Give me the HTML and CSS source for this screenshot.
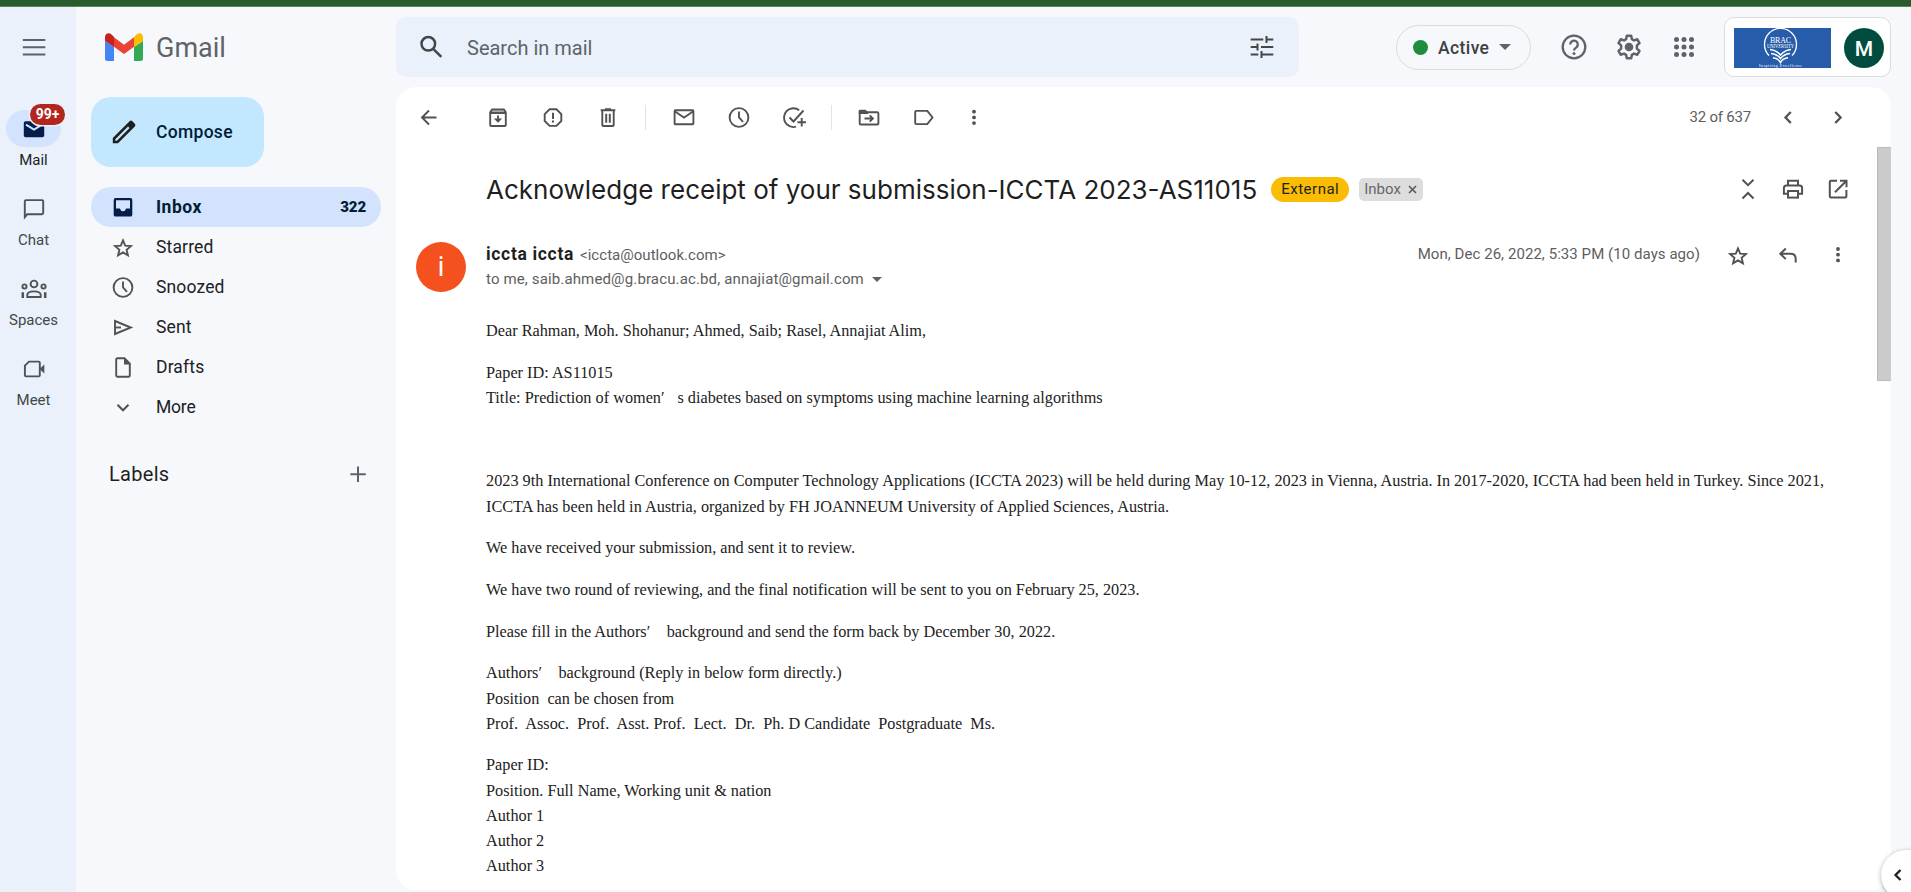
FILE: index.html
```html
<!DOCTYPE html>
<html lang="en">
<head>
<meta charset="utf-8">
<title>Gmail</title>
<link rel="stylesheet" href="styles.css">
</head>
<body>
<div class="window-strip"></div>
<div class="app">
  <nav class="rail">
    <div class="rail-menu"><svg class="ic gray" viewBox="0 0 24 24"><path class="s2" d="M.8 5h22.5M.8 12.3h22.5M.8 19.6h22.5"/></svg></div>
    <div class="rail-item active">
      <div class="rail-icon"><svg class="ic navy" viewBox="0 0 24 24"><rect class="f" x="1.8" y="4.2" width="20.4" height="16" rx="1.8"/><path class="pale" d="M4 7.6l8 5 8-5"/></svg><span class="badge">99+</span></div>
      <span class="rail-label">Mail</span>
    </div>
    <div class="rail-item">
      <div class="rail-icon"><svg class="ic" viewBox="0 0 24 24"><path class="s" d="M2.8 20.2V4.300q0-1.200 1.200-1.200h16q1.200 0 1.200 1.200v11.800q0 1.200-1.200 1.200H5.200z"/></svg></div>
      <span class="rail-label">Chat</span>
    </div>
    <div class="rail-item">
      <div class="rail-icon"><svg class="ic wide" viewBox="0 0 28 24"><circle class="s" cx="14" cy="7" r="3.400"/><circle class="s" cx="4.500" cy="9.500" r="2.100"/><circle class="s" cx="23.500" cy="9.500" r="2.100"/><path class="s" d="M7.300 20v-2q0-3.600 6.700-3.600t6.700 3.600v2z"/><path class="s25" d="M2.800 21v-5.800M25.200 21v-5.800"/></svg></div>
      <span class="rail-label">Spaces</span>
    </div>
    <div class="rail-item">
      <div class="rail-icon"><svg class="ic" viewBox="0 0 24 24"><path class="s" d="M7 4.600h9.700q1.100 0 1.100 1.100v12.600q0 1.100-1.100 1.100H4q-1.100 0-1.100-1.100V8.700z"/><path class="f" d="M17.500 12l4.800-4.500v9z"/></svg></div>
      <span class="rail-label">Meet</span>
    </div>
  </nav>

  <div class="page">
    <header class="header">
      <div class="brand">
        <svg class="logo" viewBox="0 0 38 28"><path fill="#4285f4" d="M0 8l9 6v14H2.500A2.500 2.500 0 0 1 0 25.500z"/><path fill="#34a853" d="M38 8l-9 6v14h6.500a2.500 2.500 0 0 0 2.500-2.500z"/><path fill="#ea4335" d="M8.600 4L19 11.700 29.400 4v9.400L19 21 8.600 13.400z"/><path fill="#fbbc04" d="M29 4l2.800-2.800C34.500-.8 38 .8 38 4v4l-9 6z"/><path fill="#c5221f" d="M9 4L6.200 1.200C3.500-.8 0 .8 0 4v4l9 6z"/></svg>
        <span class="brand-name">Gmail</span>
      </div>
      <div class="search">
        <svg class="ic dark" viewBox="0 0 24 24"><circle class="s25" cx="9.300" cy="8.800" r="6.800"/><path class="s25" d="M14 13.600l8.300 8.300"/></svg>
        <span class="search-text">Search in mail</span>
        <svg class="ic dark" viewBox="0 0 24 24"><path class="s2" d="M.7 4.500h12.600M16.500 1v7M16.500 4.500h6.800M.7 12h6.800M7.500 8.500v7M11 12h12.300M.7 19.500h7.600M11.500 16v7M11.500 19.500h11.800"/></svg>
      </div>
      <div class="status"><span class="dot"></span><span class="status-text">Active</span><span class="caret"></span></div>
      <svg class="ic gray h-help" viewBox="0 0 26 26"><circle class="s23" cx="13" cy="13" r="11.300"/><path class="s23" d="M9.200 10.500a3.800 3.800 0 1 1 5.900 3.100Q13 15 13 16.600"/><circle class="f" cx="13" cy="19.400" r="1.500"/></svg>
      <svg class="ic gray h-gear" viewBox="0 0 26 26"><path class="s25 j" d="M10.800 1.800h4.400l.7 3.400 2.100 1.200 3.300-1.100 2.200 3.800-2.600 2.300v3.200l2.600 2.300-2.200 3.800-3.300-1.100-2.100 1.200-.7 3.400h-4.400l-.7-3.400-2.100-1.200-3.300 1.100-2.200-3.800 2.600-2.300v-3.200L2.500 9.100l2.200-3.800L8 6.400l2.100-1.200z"/><circle class="f" cx="13" cy="13" r="4.300"/></svg>
      <svg class="ic gray h-apps" viewBox="0 0 24 24"><g class="f"><circle cx="4.500" cy="4.500" r="2.500"/><circle cx="12" cy="4.500" r="2.500"/><circle cx="19.500" cy="4.500" r="2.500"/><circle cx="4.500" cy="12" r="2.500"/><circle cx="12" cy="12" r="2.500"/><circle cx="19.500" cy="12" r="2.500"/><circle cx="4.500" cy="19.500" r="2.500"/><circle cx="12" cy="19.500" r="2.500"/><circle cx="19.500" cy="19.500" r="2.500"/></g></svg>
      <div class="account">
        <svg class="org" viewBox="0 0 97 40"><rect width="97" height="40" fill="#275caa"/><g fill="none" stroke="#fff"><path stroke-width="1.300" d="M35 27.500A16 16 0 1 1 58 27.500"/><path stroke-width="1.600" d="M36 21.500q6 .5 10.500 5.500 4.500-5 10.500-5.500M37 25.500q6 .5 9.500 5 3.500-4.500 9.500-5M39 29.800q5 .5 7.500 4.700 2.500-4.200 7.500-4.700"/></g><g fill="#fff" text-anchor="middle" font-family="Liberation Serif, serif"><text x="46.500" y="14.800" font-size="8" textLength="21">BRAC</text><text x="46.500" y="20" font-size="5.500" textLength="27" lengthAdjust="spacingAndGlyphs">UNIVERSITY</text><text x="46.500" y="39.200" font-size="4" textLength="43">Inspiring Excellence</text></g></svg>
        <span class="avatar-m">M</span>
      </div>
    </header>

    <div class="content">
      <aside class="side">
        <div class="compose"><svg class="ic pencil" viewBox="0 0 24 24"><path class="f" fill-rule="evenodd" d="M.8 23.300v-5.200L17.600 1.300q1.400-1.400 2.800 0l2.400 2.400q1.400 1.400 0 2.800L6 23.300zM3.300 20.800h1.600L17.600 8.100 16 6.500 3.300 19.200z"/></svg><span>Compose</span></div>
        <div class="nav">
          <div class="nav-row sel"><svg class="ic navy" viewBox="0 0 24 24"><path class="f" fill-rule="evenodd" d="M4.600 3h14.800q1.900 0 1.900 1.900v14.800q0 1.900-1.900 1.900H4.600q-1.900 0-1.900-1.900V4.900Q2.700 3 4.600 3zM5 5.200v8.300h3.800q1 2.700 3.200 2.700t3.200-2.700H19V5.200z"/></svg><span>Inbox</span><b>322</b></div>
          <div class="nav-row"><svg class="ic" viewBox="0 0 24 24"><path class="s" d="M12 5.400l2.200 5.200 5.700.5-4.300 3.700 1.300 5.500-4.900-2.900-4.900 2.900 1.300-5.500-4.300-3.700 5.700-.5z"/></svg><span>Starred</span></div>
          <div class="nav-row"><svg class="ic" viewBox="0 0 24 24"><circle class="s" cx="12" cy="12.500" r="9.400"/><path class="s" d="M12 6.500v6l4 4.300"/></svg><span>Snoozed</span></div>
          <div class="nav-row"><svg class="ic" viewBox="0 0 24 24"><path class="s" d="M4 6l15.800 6.500L4 19z"/><path class="s" d="M4 12.500h6"/></svg><span>Sent</span></div>
          <div class="nav-row"><svg class="ic" viewBox="0 0 24 24"><path class="s" d="M13.500 3.300H6.300q-1.100 0-1.100 1.100v16.200q0 1.100 1.100 1.100h11.400q1.100 0 1.100-1.100V8.600z"/><path class="f" d="M13 3l6.500 6.500H13z"/></svg><span>Drafts</span></div>
          <div class="nav-row more"><svg class="ic" viewBox="0 0 24 24"><path class="s2" d="M6.500 9.800l5.500 5.500 5.500-5.500"/></svg><span>More</span></div>
        </div>
        <div class="labels"><span>Labels</span><svg class="ic gray" viewBox="0 0 24 24"><path class="s2" d="M12 4.500v15.500M4.300 12.300h15.500"/></svg></div>
      </aside>

      <main class="card">
        <div class="toolbar">
          <svg class="ic" viewBox="0 0 24 24"><path class="s" d="M19.500 12.500h-14M12 5.500l-7 7 7 7"/></svg>
          <svg class="ic g1" viewBox="0 0 24 24"><path class="s" d="M4.200 7.200V20q0 1 1 1h13.600q1 0 1-1V7.200L17.900 4.400H6.100z"/><path class="f tint" d="M4.500 5h15v2.600h-15z"/><path class="s" d="M4 8h16M12 10.500v5"/><path class="f" d="M7.800 13.500h8.400L12 17.800z"/></svg>
          <svg class="ic g2" viewBox="0 0 24 24"><path class="s" d="M8.600 4.300h6.800l4.900 4.900v6.800l-4.900 4.900H8.600l-4.900-4.900V9.200z"/><path class="s2" d="M12 7.700v6.300M12 15.600v2"/></svg>
          <svg class="ic g2" viewBox="0 0 24 24"><path class="s2" d="M4.700 5.300h14.600M9 4.300h6"/><path class="s" d="M6.300 6v14q0 1 1 1h9.400q1 0 1-1V6"/><path class="s2" d="M10.200 8.800v9M13.800 8.800v9"/></svg>
          <i class="sep"></i>
          <svg class="ic g3" viewBox="0 0 24 24"><rect class="s" x="2.600" y="5.300" width="18.800" height="14" rx=".8"/><path class="s" d="M3 6.500l9 6 9-6"/></svg>
          <svg class="ic g2" viewBox="0 0 24 24"><circle class="s" cx="12" cy="12.500" r="9.400"/><path class="s" d="M12 6.500v6l4 4.300"/></svg>
          <svg class="ic g2" viewBox="0 0 24 24"><path class="s" d="M17.200 5.200a9.400 9.400 0 1 0-3.200 16.500M7.500 12.500l4 4L21.500 5.500M15.500 17.300h8.500M19.700 13v8.500"/></svg>
          <i class="sep"></i>
          <svg class="ic g3" viewBox="0 0 24 24"><path class="s" d="M2.700 7.300h17.600q1.100 0 1.100 1.100v10q0 1.100-1.100 1.100H3.700q-1 0-1-1z"/><path class="f" d="M1.800 9V6q0-1.300 1.300-1.300h5.500l2.500 2.800v1.500z"/><path class="s" d="M7.500 13.500h8M12.700 10.300l3.200 3.200-3.200 3.200"/></svg>
          <svg class="ic g2" viewBox="0 0 24 24"><path class="s" d="M15.300 5.900H4.300q-1.100 0-1.100 1.100v11q0 1.100 1.100 1.100h11l5.200-6.600z"/></svg>
          <svg class="ic g4" viewBox="0 0 24 24"><g class="f"><circle cx="12" cy="6.700" r="1.900"/><circle cx="12" cy="12.400" r="1.900"/><circle cx="12" cy="18.100" r="1.900"/></g></svg>
          <span class="count">32 of 637</span>
          <svg class="ic c1" viewBox="0 0 24 24"><path class="s23" d="M14.800 7l-5.300 5.500 5.300 5.500"/></svg>
          <svg class="ic c2" viewBox="0 0 24 24"><path class="s23" d="M9.300 7l5.300 5.500L9.300 18"/></svg>
        </div>

        <div class="scroll">
          <div class="mail">
            <div class="subject">
              <h1>Acknowledge receipt of your submission-ICCTA 2023-AS11015</h1>
              <span class="external">External</span>
              <span class="tag">Inbox<svg viewBox="0 0 9 9"><path d="M1 1l7 7M8 1L1 8"/></svg></span>
              <span class="subject-actions">
                <svg class="ic" viewBox="0 0 24 24"><path class="s2" d="M6.500 2.700l5.500 5.500 5.500-5.500M6.500 21.500l5.500-5.500 5.500 5.500"/></svg>
                <svg class="ic" viewBox="0 0 24 24"><path class="s2" d="M7 8V3.800h10V8M6.800 16.800H2.900V11q0-2.500 2.500-2.500h13.200q2.500 0 2.500 2.500v5.800h-3.900"/><rect class="s2" x="7" y="14" width="10" height="6.600"/></svg>
                <svg class="ic" viewBox="0 0 24 24"><path class="s2" d="M11 3.800H5q-1.200 0-1.200 1.200v14.200q0 1.200 1.200 1.200h14.200q1.200 0 1.200-1.200V13M14 3.800h6.500v6.500M20 4.300L9 15.300"/></svg>
              </span>
            </div>
            <div class="sender">
              <span class="avatar-i">i</span>
              <div class="who">
                <div class="line1"><span class="name">iccta iccta</span><span class="addr">&lt;iccta@outlook.com&gt;</span></div>
                <div class="line2"><span>to me, saib.ahmed@g.bracu.ac.bd, annajiat@gmail.com</span><span class="caret small"></span></div>
              </div>
              <span class="date">Mon, Dec 26, 2022, 5:33 PM (10 days ago)</span>
              <span class="sender-actions">
                <svg class="ic" viewBox="0 0 24 24"><path class="s" d="M12 5.400l2.200 5.200 5.700.5-4.300 3.700 1.300 5.500-4.900-2.900-4.900 2.900 1.300-5.500-4.300-3.700 5.700-.5z"/></svg>
                <svg class="ic" viewBox="0 0 24 24"><path class="s2" d="M9.800 5.500l-5.500 5.300 5.500 5.300M4.800 10.800H14.500q5.200 0 5.200 5.200v3.500"/></svg>
                <svg class="ic" viewBox="0 0 24 24"><g class="f"><circle cx="12" cy="6" r="1.900"/><circle cx="12" cy="11.700" r="1.900"/><circle cx="12" cy="17.400" r="1.900"/></g></svg>
              </span>
            </div>
            <div class="body">
              <p>Dear Rahman, Moh. Shohanur; Ahmed, Saib; Rasel, Annajiat Alim,</p>
              <p>Paper ID: AS11015<br>Title: Prediction of women<i class="prime">′</i>s diabetes based on symptoms using machine learning algorithms</p>
              <p>&nbsp;</p>
              <p>2023 9th International Conference on Computer Technology Applications (ICCTA 2023) will be held during May 10-12, 2023 in Vienna, Austria. In 2017-2020, ICCTA had been held in Turkey. Since 2021,<br>ICCTA has been held in Austria, organized by FH JOANNEUM University of Applied Sciences, Austria.</p>
              <p>We have received your submission, and sent it to review.</p>
              <p>We have two round of reviewing, and the final notification will be sent to you on February 25, 2023.</p>
              <p>Please fill in the Authors<i class="prime spaced">′</i>background and send the form back by December 30, 2022.</p>
              <p>Authors<i class="prime spaced">′</i>background (Reply in below form directly.)<br>Position&nbsp; can be chosen from<br>Prof.&nbsp; Assoc.&nbsp; Prof.&nbsp; Asst. Prof.&nbsp; Lect.&nbsp; Dr.&nbsp; Ph. D Candidate&nbsp; Postgraduate&nbsp; Ms.</p>
              <p>Paper ID:<br>Position. Full Name, Working unit &amp; nation<br>Author 1<br>Author 2<br>Author 3</p>
            </div>
          </div>
          <div class="thumb"></div>
        </div>
      </main>
    </div>
  </div>
  <div class="panel-toggle"><svg viewBox="0 0 10 14"><path d="M7.500 2L2.500 7l5 5"/></svg></div>
</div>
</body>
</html>
```

FILE: styles.css
```css
* { box-sizing: border-box; }
body { margin: 0; width: 1911px; height: 892px; overflow: hidden; background: #f6f8fc; color: #1f1f1f; font-family: Roboto, "Liberation Sans", sans-serif; }
svg { display: block; flex: none; }
.ic { width: 24px; height: 24px; overflow: visible; color: #505352; }
.ic.wide { width: 28px; }
.ic.dark { color: #444746; }
.ic.gray { color: #5f6368; }
.ic.navy { color: #041e49; }
.s, .s2, .s23, .s25 { fill: none; stroke: currentColor; stroke-width: 1.9; }
.s2 { stroke-width: 2; }
.s23 { stroke-width: 2.3; }
.s25 { stroke-width: 2.5; }
.j { stroke-linejoin: round; }
.f { fill: currentColor; }
.tint { opacity: .5; }
.pale { fill: none; stroke: #d3e3fd; stroke-width: 2; }

.window-strip { height: 7px; background: #285c2c; border-bottom: 1px solid #5a855d; }
.app { display: flex; height: 885px; position: relative; }

.rail { width: 76px; background: #eaf1fb; padding: 28px 0 0 6px; flex: none; }
.rail-menu { height: 75px; padding-left: 16px; }
.rail-item { width: 55px; height: 80px; display: flex; flex-direction: column; align-items: center; }
.rail-icon { width: 55px; height: 37px; display: flex; align-items: center; justify-content: center; position: relative; border-radius: 19px; flex: none; }
.active .rail-icon { background: #d3e3fd; }
.rail-label { font-size: 15px; line-height: 18px; margin-top: 4px; color: #444746; white-space: nowrap; }
.active .rail-label { color: #1f1f1f; }
.badge { position: absolute; left: 24px; top: -6px; width: 35px; height: 21px; border-radius: 11px; background: #b3261e; color: #fff; font-size: 14px; line-height: 21px; font-weight: 700; text-align: center; box-shadow: 0 0 0 1.5px #eaf1fb; }

.page { flex: 1; display: flex; flex-direction: column; }
.header { height: 80px; display: flex; align-items: center; flex: none; padding-right: 20px; }
.brand { width: 320px; display: flex; align-items: center; padding-left: 29px; }
.logo { width: 38px; height: 28px; }
.brand-name { margin-left: 13px; padding-top: 1px; font-size: 27px; color: #5f6368; }
.search { width: 903px; height: 60px; border-radius: 10px; background: #eaf1fb; display: flex; align-items: center; padding: 0 25px 0 23px; }
.search-text { flex: 1; margin-left: 24px; padding-top: 2px; font-size: 20px; color: #5f6368; }
.status { width: 135px; height: 45px; margin-left: 97px; border: 1px solid #dadce0; border-radius: 23px; display: flex; align-items: center; padding-left: 16px; }
.dot { width: 15px; height: 15px; border-radius: 50%; background: #1e8e3e; }
.status-text { margin-left: 10px; padding-top: 1px; font-size: 17.5px; font-weight: 500; letter-spacing: .4px; color: #3c4043; }
.caret { width: 0; border: 6px solid transparent; border-top: 6.5px solid #5f6368; border-bottom: 0; margin-left: 10px; }
.h-help { width: 26px; height: 26px; margin-left: 30px; }
.h-gear { width: 26px; height: 26px; margin-left: 29px; }
.h-apps { margin-left: 30px; }
.account { width: 167px; height: 60px; margin-left: auto; background: #fff; border: 1px solid #dadce0; border-radius: 10px; display: flex; align-items: center; padding: 2px 6px 0 9px; justify-content: space-between; }
.org { width: 97px; height: 40px; }
.avatar-m { width: 40px; height: 40px; border-radius: 50%; background: #004d40; color: #fff; font-size: 21px; font-weight: 500; line-height: 43px; text-align: center; }

.content { flex: 1; display: flex; min-height: 0; }
.side { width: 320px; padding: 10px 15px 0; flex: none; }
.compose { width: 173px; height: 70px; border-radius: 20px; background: #c2e7ff; display: flex; align-items: center; gap: 20px; padding-left: 21px; font-size: 17.5px; font-weight: 500; letter-spacing: .3px; color: #001d35; }
.pencil { color: #1f1f1f; }
.nav { margin-top: 20px; }
.nav-row { height: 40px; display: flex; align-items: center; gap: 21px; padding: 0 15px 0 20px; font-size: 17.5px; letter-spacing: .15px; color: #202124; border-radius: 20px; }
.nav-row.sel { background: #d3e3fd; font-weight: 700; letter-spacing: .5px; color: #001d35; }
.nav-row.more { letter-spacing: -.2px; }
.nav-row b { margin-left: auto; font-size: 15px; letter-spacing: -.1px; }
.labels { display: flex; justify-content: space-between; align-items: center; margin-top: 35px; height: 24px; padding: 0 11px 0 18px; font-size: 20px; letter-spacing: .3px; }

.card { width: 1495px; height: 803px; background: #fff; border-radius: 20px; overflow: hidden; display: flex; flex-direction: column; }
.toolbar { height: 60px; display: flex; align-items: center; padding-left: 21px; flex: none; }
.g1 { margin-left: 45px; }
.g2 { margin-left: 31px; }
.sep { width: 1px; height: 25px; background: #e1e5ea; margin-left: 25px; }
.g3 { margin-left: 25.5px; }
.g4 { margin-left: 26px; }
.count { margin-left: auto; font-size: 15px; letter-spacing: -.2px; color: #5e5e5e; }
.c1 { margin-left: 25px; }
.c2 { margin: 0 41px 0 26px; }
.scroll { flex: 1; display: flex; justify-content: space-between; min-height: 0; }
.thumb { width: 14px; height: 234px; background: #cbcbcb; border: 1px solid #bbb; border-right: 0; }
.mail { width: 1467px; padding: 24px 0 0 20px; }
.subject { display: flex; align-items: center; height: 36px; padding-left: 70px; }
.subject h1 { margin: 0; padding-top: 2px; font: 400 26px/36px Inter, Roboto, sans-serif; white-space: nowrap; }
.external { height: 25px; line-height: 25px; padding: 0 10px; margin-left: 14px; border-radius: 13px; background: #fbbc04; font-size: 15px; letter-spacing: .5px; }
.tag { height: 23px; line-height: 23px; margin-left: 10px; padding: 0 6px 0 5px; background: #ddd; border-radius: 5px; display: flex; align-items: center; gap: 7px; font-size: 15px; color: #666; }
.tag svg { width: 9px; height: 9px; fill: none; stroke: #555; stroke-width: 1.5; }
.subject-actions { margin-left: auto; display: flex; gap: 21px; padding-right: 13px; }
.sender { display: flex; margin-top: 35px; height: 50px; }
.avatar-i { width: 50px; height: 50px; border-radius: 50%; background: #f4511e; color: #fff; font-size: 27px; line-height: 51px; text-align: center; flex: none; }
.who { margin-left: 20px; font-size: 15px; letter-spacing: .14px; color: #5e5e5e; white-space: nowrap; }
.line1 { height: 25px; line-height: 24px; display: flex; align-items: baseline; gap: 6px; }
.line2 { height: 25px; line-height: 25px; display: flex; align-items: center; }
.name { font-size: 17.5px; font-weight: 700; letter-spacing: .67px; line-height: 24px; color: #1f1f1f; }
.addr { letter-spacing: .03px; }
.small { border-width: 5px 5px 0; margin-left: 8px; }
.date { margin-left: auto; font-size: 15px; letter-spacing: .06px; line-height: 25px; color: #5e5e5e; white-space: nowrap; }
.sender-actions { display: flex; gap: 26px; margin: 1px 13px 0 26px; }
.body { margin: 27px 0 0 70px; font: 16.25px/25.2px "Liberation Serif", serif; color: #222; white-space: nowrap; }
.body p { margin: 0 0 16.5px; }
.prime { display: inline-block; width: 16.5px; font-style: normal; line-height: 1; }
.spaced { width: 20px; }

.panel-toggle { position: absolute; left: 1881px; top: 843px; width: 60px; height: 50px; border-radius: 25px; background: #fff; box-shadow: 0 1px 4px rgba(60,64,67,.45); padding: 18px 0 0 12px; }
.panel-toggle svg { width: 10px; height: 14px; fill: none; stroke: #1f1f1f; stroke-width: 2.3; }
```
